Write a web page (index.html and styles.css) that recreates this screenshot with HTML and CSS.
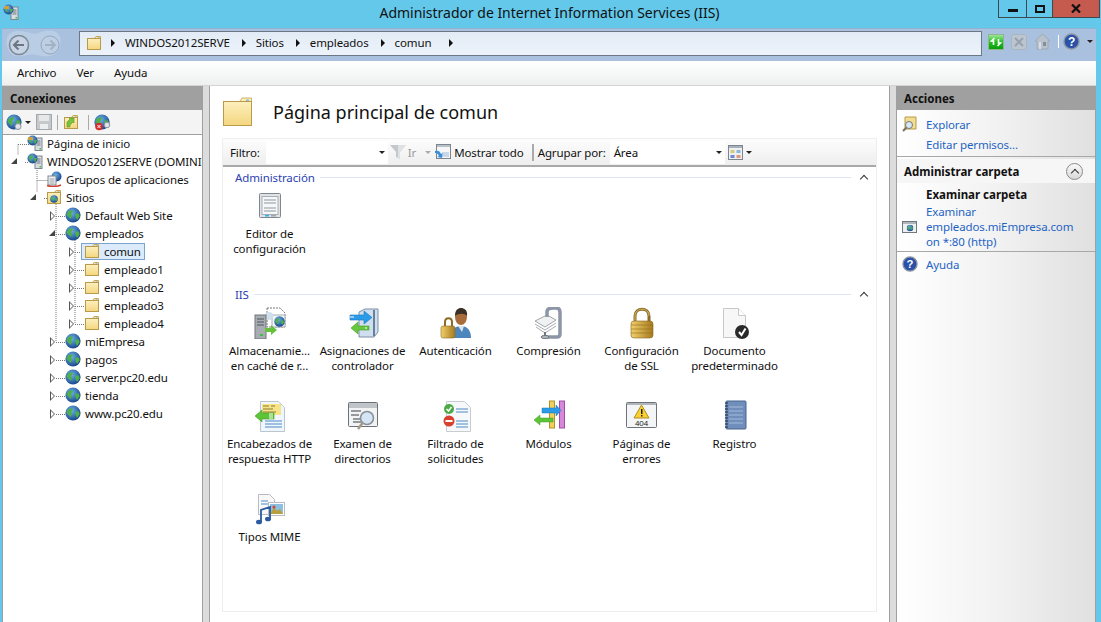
FILE: index.html
```html
<!DOCTYPE html>
<html lang="es">

<head>
    <meta charset="UTF-8" />
    <title>Administrador de Internet Information Services (IIS)</title>
    <link rel="stylesheet" href="styles.css">
</head>

<body>
    <!-- Shared icons -->
    <svg class="defs" width="0" height="0">
        <defs>
            <linearGradient id="folderFace" x1="0" y1="0" x2="0" y2="1">
                <stop offset="0" stop-color="#fdf0bd" />
                <stop offset="1" stop-color="#f3d67f" />
            </linearGradient>
            <radialGradient id="globeFill" cx="0.4" cy="0.35" r="0.7">
                <stop offset="0" stop-color="#6fb4e8" />
                <stop offset="1" stop-color="#123f86" />
            </radialGradient>
            <linearGradient id="goldFill" x1="0" y1="0" x2="1" y2="0">
                <stop offset="0" stop-color="#f2cf6a" />
                <stop offset="1" stop-color="#a67a1e" />
            </linearGradient>
            <linearGradient id="greenBtn" x1="0" y1="0" x2="0" y2="1">
                <stop offset="0" stop-color="#a8e8a0" />
                <stop offset="0.5" stop-color="#20c020" />
                <stop offset="1" stop-color="#0a9a0a" />
            </linearGradient>
            <symbol id="folder" viewBox="0 0 16 16">
                <path d="M9 3 10 1.5h4.5V4H9z" fill="#fbeeb8" stroke="#c8a850" />
                <rect x="11.5" y="2.2" width="2" height="1.2" fill="#8fb6dc" />
                <rect x="1.5" y="3.5" width="13" height="11" fill="url(#folderFace)" stroke="#b89a4a" />
            </symbol>
            <symbol id="globe" viewBox="0 0 16 16">
                <circle cx="8" cy="8" r="7.6" fill="url(#globeFill)" />
                <path d="M3 4.5 6.5 3 8 5 6 7 7 9 5.5 12 3.5 9.5 1.5 8z" fill="#4fb04a" />
                <path d="M10 6.5h4l.5 3-2.500 3.500-1.500-3z" fill="#4fb04a" />
            </symbol>
            <symbol id="server-globe" viewBox="0 0 16 16">
                <rect x="8" y="3" width="7" height="12.500" fill="#d8dde2" stroke="#7d8690" />
                <path d="M9.500 6h4M9.500 8h4M9.500 10h4" stroke="#6d7680" />
                <rect x="12.500" y="13" width="1.500" height="1.500" fill="#40c040" />
                <circle cx="5.500" cy="5.500" r="5" fill="url(#globeFill)" />
                <path d="M2 3.500 5 2l1 2-2 2 .5 2.500L2.500 7z" fill="#4fb04a" />
                <path d="M7 5h3l-1 3-1.500 1z" fill="#4fb04a" />
            </symbol>
        </defs>
    </svg>

    <!-- Title bar -->
    <div class="titlebar">
        <svg class="app-icon" width="16" height="16">
            <use href="#server-globe" />
            <path d="M1 2h5v3H1z" fill="#f0a030" opacity="0.8" />
        </svg>
        <div class="title">Administrador de Internet Information Services (IIS)</div>
        <div class="win-buttons">
            <div class="win-btn btn-min"><span class="glyph-min"></span></div>
            <div class="win-btn btn-max"><span class="glyph-max"></span></div>
            <div class="win-btn btn-close">
                <svg width="10" height="9" viewBox="0 0 10 9">
                    <path d="M1 .5 9 8.500M9 .5 1 8.500" stroke="#111" stroke-width="2.200" />
                </svg>
            </div>
        </div>
    </div>

    <div class="window">
        <!-- Address band -->
        <div class="address-band">
            <svg class="nav-buttons" width="56" height="28" viewBox="0 0 56 28">
                <path d="M1 8C3 1 12 0 20 2c6 1.500 9 2.500 15 0 8-3 17-2 19 5 2 8-1 17-10 19-7 1.500-11-1-16-1.500C21 24 17 27 10 26 3 25-1 16 1 8z" fill="#bccfe6" opacity="0.85" />
                <circle cx="13" cy="15" r="9.500" fill="#c6d4e6" stroke="#7e8a96" stroke-width="1.600" />
                <path d="M18 15H9M12.500 10.500 8 15l4.500 4.500" fill="none" stroke="#6c7682" stroke-width="2" />
                <circle cx="44" cy="15" r="9" fill="#bccfe6" stroke="#98a8ba" />
                <path d="M39 15h9M44.500 10.500 49 15l-4.500 4.500" fill="none" stroke="#a4b2c2" stroke-width="2" />
            </svg>
            <div class="address-box">
                <svg class="crumb-folder" width="16" height="16"><use href="#folder" /></svg>
                <span class="crumb-arrow"></span>
                <span class="crumb">WINDOS2012SERVE</span>
                <span class="crumb-arrow"></span>
                <span class="crumb">Sitios</span>
                <span class="crumb-arrow"></span>
                <span class="crumb">empleados</span>
                <span class="crumb-arrow"></span>
                <span class="crumb crumb-last">comun</span>
                <span class="crumb-arrow"></span>
            </div>
            <div class="address-tools">
                <svg width="16" height="16" viewBox="0 0 16 16">
                    <rect x=".5" y=".5" width="15" height="15" fill="url(#greenBtn)" stroke="#8fb48f" />
                    <path d="M6.500 4 3.500 7H5.500V11M9.500 12l3-3H10.500V5" fill="none" stroke="#fff" stroke-width="1.600" />
                </svg>
                <svg width="16" height="16" viewBox="0 0 16 16">
                    <rect x=".5" y=".5" width="15" height="15" rx="2" fill="#bcc6d0" stroke="#a8b4c2" />
                    <path d="M4 4l8 8M12 4l-8 8" stroke="#98a2ac" stroke-width="2" />
                </svg>
                <svg width="17" height="17" viewBox="0 0 17 17">
                    <path d="M8.500 1 1 8h2v8h11V8h2z" fill="#b8c2cc" stroke="#a0aab4" />
                    <rect x="9" y="9" width="3" height="4" fill="#848e98" />
                    <rect x="5" y="9" width="2" height="7" fill="#d8dee4" />
                </svg>
                <span class="tool-sep"></span>
                <svg width="17" height="17" viewBox="0 0 17 17">
                    <circle cx="8.500" cy="8.500" r="7.500" fill="#2a50a8" stroke="#8b94a2" stroke-width="1.400" />
                    <text x="8.500" y="13" class="help-mark">?</text>
                </svg>
                <span class="mini-arrow"></span>
            </div>
        </div>

        <!-- Menu -->
        <div class="menubar">
            <span>Archivo</span>
            <span>Ver</span>
            <span>Ayuda</span>
        </div>

        <div class="panes">
            <!-- Connections -->
            <div class="pane-left">
                <div class="pane-head">Conexiones</div>
                <div class="conn-tools">
                    <svg width="17" height="17" viewBox="0 0 17 17">
                        <use href="#globe" width="16" height="16" />
                        <circle cx="12" cy="12.500" r="3" fill="#dfe4ea" stroke="#8a929c" />
                    </svg>
                    <span class="mini-arrow"></span>
                    <svg class="tool-gap" width="16" height="16" viewBox="0 0 16 16">
                        <rect x=".5" y=".5" width="15" height="15" fill="#c6c9cc" stroke="#a4a8ac" />
                        <rect x="3" y="1" width="10" height="6" fill="#e6e8ea" />
                        <rect x="4" y="10" width="8" height="5" fill="#eceeef" />
                    </svg>
                    <span class="conn-sep"></span>
                    <svg width="16" height="16" viewBox="0 0 16 16">
                        <use href="#folder" />
                        <path d="M4 13V8l3-3-1-1h5v5l-1-1-3 3v2z" fill="#7cc040" stroke="#5a9a28" stroke-width=".6" />
                    </svg>
                    <span class="conn-sep conn-sep-wide"></span>
                    <svg width="17" height="17" viewBox="0 0 17 17">
                        <use href="#globe" width="16" height="16" />
                        <circle cx="13" cy="11" r="2.800" fill="#dfe4ea" stroke="#8a929c" />
                        <circle cx="5" cy="12.500" r="3.800" fill="#d03030" />
                        <path d="M3.500 11l3 3M6.500 11l-3 3" stroke="#fff" />
                    </svg>
                </div>
                <div class="tree">
                    <svg class="tree-lines" width="90" height="290">
                        <path d="M15 10.500h11M15 10.500V21M22 28.500h4M34 34v12.500h11M34 46.500V58M41 64.500h4M53 70V208M53 82.500h11M53 100.500h11M53 208.500h11M53 226.500h11M53 244.500h11M53 262.500h11M53 280.500h11M72 106V190M72 118.500h9M72 136.500h11M72 154.500h11M72 172.500h11M72 190.500h11"
                            fill="none" stroke="#777" stroke-dasharray="1 1" />
                    </svg>
                    <div class="tree-row lvl-0"><span class="exp"></span>
                        <svg class="node" width="16" height="16"><use href="#server-globe" /><path d="M1 2h5v3H1z" fill="#f0a030" opacity="0.8" /></svg>
                        <span class="node-text">Página de inicio</span>
                    </div>
                    <div class="tree-row lvl-0"><span class="exp open"></span>
                        <svg class="node" width="16" height="16"><use href="#server-globe" /></svg>
                        <span class="node-text">WINDOS2012SERVE (DOMINIO</span>
                    </div>
                    <div class="tree-row lvl-1"><span class="exp"></span>
                        <svg class="node" width="16" height="16" viewBox="0 0 16 16">
                            <circle cx="10.500" cy="5.500" r="5" fill="url(#globeFill)" />
                            <rect x="2" y="5" width="8" height="9" fill="#eef0f2" stroke="#808890" />
                            <path d="M3.500 8h5M3.500 10h5M3.500 12h5" stroke="#9aa2aa" />
                            <path d="M1 14.500c4 1.500 9 1.500 14-.5" fill="none" stroke="#d04030" stroke-width="1.500" />
                        </svg>
                        <span class="node-text">Grupos de aplicaciones</span>
                    </div>
                    <div class="tree-row lvl-1"><span class="exp open"></span>
                        <svg class="node" width="16" height="16">
                            <use href="#folder" />
                            <use href="#globe" x="4" y="6" width="8" height="8" />
                        </svg>
                        <span class="node-text">Sitios</span>
                    </div>
                    <div class="tree-row lvl-2"><span class="exp closed"></span>
                        <svg class="node" width="16" height="16"><use href="#globe" /></svg>
                        <span class="node-text">Default Web Site</span>
                    </div>
                    <div class="tree-row lvl-2"><span class="exp open"></span>
                        <svg class="node" width="16" height="16"><use href="#globe" /></svg>
                        <span class="node-text">empleados</span>
                    </div>
                    <div class="tree-row lvl-3"><span class="exp closed"></span>
                        <span class="selected">
                            <svg class="node" width="16" height="16"><use href="#folder" /></svg>
                            <span class="node-text">comun</span>
                        </span>
                    </div>
                    <div class="tree-row lvl-3"><span class="exp closed"></span>
                        <svg class="node" width="16" height="16"><use href="#folder" /></svg>
                        <span class="node-text">empleado1</span>
                    </div>
                    <div class="tree-row lvl-3"><span class="exp closed"></span>
                        <svg class="node" width="16" height="16"><use href="#folder" /></svg>
                        <span class="node-text">empleado2</span>
                    </div>
                    <div class="tree-row lvl-3"><span class="exp closed"></span>
                        <svg class="node" width="16" height="16"><use href="#folder" /></svg>
                        <span class="node-text">empleado3</span>
                    </div>
                    <div class="tree-row lvl-3"><span class="exp closed"></span>
                        <svg class="node" width="16" height="16"><use href="#folder" /></svg>
                        <span class="node-text">empleado4</span>
                    </div>
                    <div class="tree-row lvl-2"><span class="exp closed"></span>
                        <svg class="node" width="16" height="16"><use href="#globe" /></svg>
                        <span class="node-text">miEmpresa</span>
                    </div>
                    <div class="tree-row lvl-2"><span class="exp closed"></span>
                        <svg class="node" width="16" height="16"><use href="#globe" /></svg>
                        <span class="node-text">pagos</span>
                    </div>
                    <div class="tree-row lvl-2"><span class="exp closed"></span>
                        <svg class="node" width="16" height="16"><use href="#globe" /></svg>
                        <span class="node-text">server.pc20.edu</span>
                    </div>
                    <div class="tree-row lvl-2"><span class="exp closed"></span>
                        <svg class="node" width="16" height="16"><use href="#globe" /></svg>
                        <span class="node-text">tienda</span>
                    </div>
                    <div class="tree-row lvl-2"><span class="exp closed"></span>
                        <svg class="node" width="16" height="16"><use href="#globe" /></svg>
                        <span class="node-text">www.pc20.edu</span>
                    </div>
                </div>
            </div>

            <div class="splitter"></div>

            <!-- Center -->
            <div class="pane-center">
                <div class="page-head">
                    <svg width="32" height="32" viewBox="0 0 32 32">
                        <path d="M18 6l2-3h9.500v6H18z" fill="#fbeeb8" stroke="#cdb468" />
                        <rect x="24" y="4.500" width="3" height="2" fill="#8fb6dc" />
                        <rect x="1.500" y="6.500" width="28" height="24" fill="url(#folderFace)" stroke="#b89a4a" />
                    </svg>
                    <h1>Página principal de comun</h1>
                </div>
                <div class="frame">
                    <div class="filter-bar">
                        <span class="bar-label">Filtro:</span>
                        <span class="combo combo-filter"><span class="mini-arrow"></span></span>
                        <svg class="funnel" width="16" height="16" viewBox="0 0 16 16">
                            <path d="M0 1h16L10 8v7l-4-2V8z" fill="#c4c8cc" />
                            <path d="M8 1h8l-6 7v7l-2-1z" fill="#dfe2e4" />
                        </svg>
                        <span class="bar-muted">Ir</span>
                        <span class="mini-arrow muted"></span>
                        <svg class="show-icon" width="16" height="16" viewBox="0 0 16 16">
                            <rect x="1.500" y=".5" width="14" height="14" fill="#f4f6f8" stroke="#7d8690" />
                            <rect x="2" y="1" width="13" height="2" fill="#b8c0c8" />
                            <rect x="7" y="8" width="7" height="5" fill="#c8d8e8" />
                            <path d="M0 7c3-1 5 0 6 3l1.500-1L7 14l-5-1 2-1C3 10 2 9 0 9z" fill="#3a90d8" />
                        </svg>
                        <span class="bar-label">Mostrar todo</span>
                        <span class="bar-sep"></span>
                        <span class="bar-label">Agrupar por:</span>
                        <span class="combo combo-group">Área<span class="mini-arrow"></span></span>
                        <svg class="view-icon" width="15" height="15" viewBox="0 0 15 15">
                            <rect x=".5" y=".5" width="14" height="14" fill="#eef0f2" stroke="#7d8690" />
                            <rect x="1" y="1" width="13" height="2" fill="#a8b0b8" />
                            <rect x="2.500" y="5" width="4" height="3" fill="#d8c878" />
                            <rect x="8.500" y="5" width="4" height="3" fill="#88b8e0" />
                            <rect x="2.500" y="10" width="4" height="3" fill="#7088d0" />
                            <rect x="8.500" y="10" width="4" height="3" fill="#e09878" />
                        </svg>
                        <span class="mini-arrow"></span>
                    </div>

                    <div class="section-head">
                        <span>Administración</span><span class="section-line"></span><span class="chevron"></span>
                    </div>
                    <div class="feature-grid">
                        <div class="feature">
                            <svg width="32" height="32" viewBox="0 0 32 32">
                                <rect x="5.500" y="3.500" width="21" height="24" rx="1" fill="#dfe3e7" stroke="#7f868e" />
                                <rect x="8" y="6.500" width="16" height="18" fill="#f6f7f8" stroke="#a8aeb4" />
                                <path d="M10 10h12M10 13h12M10 18h12M10 21h12" stroke="#8f979f" />
                                <rect x="11" y="25" width="4" height="1.500" fill="#28b4e8" />
                                <rect x="17" y="25" width="5" height="1.500" fill="#a0a6ac" />
                            </svg>
                            <div class="feature-label">Editor de<br>configuración</div>
                        </div>
                    </div>

                    <div class="section-head section-second">
                        <span>IIS</span><span class="section-line"></span><span class="chevron"></span>
                    </div>
                    <div class="feature-grid">
                        <div class="feature">
                            <svg width="32" height="32" viewBox="0 0 32 32">
                                <path d="M13 1h13l5 5v14H13z" fill="#fff" stroke="#777" stroke-dasharray="2 1" />
                                <path d="M18 8h13v12H18z" fill="#f2f4f6" stroke="#a8b0b8" />
                                <circle cx="15" cy="9" r="4" fill="#cfe0ea" />
                                <rect x="1" y="8" width="11" height="24" fill="#a6acb2" stroke="#70767c" />
                                <path d="M3 12h7M3 15h7M3 18h7" stroke="#50565c" />
                                <rect x="6" y="27" width="3" height="2" fill="#40c040" />
                                <use href="#globe" x="20" y="9" width="11" height="11" />
                                <path d="M11 21h6v-3l6 5-6 5v-3h-6z" fill="#66c23c" />
                            </svg>
                            <div class="feature-label">Almacenamie...<br>en caché de r...</div>
                        </div>
                        <div class="feature">
                            <svg width="32" height="32" viewBox="0 0 32 32">
                                <path d="M12 5 18 2h13v23l-4 5H12z" fill="#cfdff0" stroke="#7c8fa6" />
                                <path d="M27 3v26" stroke="#6a809a" stroke-width="2" />
                                <path d="M3 8h14V4l8 6.500-8 6.500v-4H3z" fill="#2b9be8" stroke="#1b78c0" stroke-width=".6" />
                                <path d="M4 21l7-6v4h11v4H11v4z" fill="#66c83c" stroke="#489a28" stroke-width=".6" />
                                <path d="M4 9v2M6 9v2M19 20v2" stroke="#fff" />
                            </svg>
                            <div class="feature-label">Asignaciones de<br>controlador</div>
                        </div>
                        <div class="feature">
                            <svg width="32" height="32" viewBox="0 0 32 32">
                                <path d="M11 31c-1-8 4-12 10-12s10 4 10 12z" fill="#4d86bc" />
                                <path d="M18 19h6l-2 6z" fill="#d8e4ee" />
                                <ellipse cx="21" cy="10" rx="6" ry="8" fill="#a86c3c" />
                                <path d="M15 9c0-6 3-8 6-8s7 2 6 8c-2-3-9-3-12 0z" fill="#3a3026" />
                                <path d="M5 20v-5c0-5 7-5 7 0v5" fill="none" stroke="#8a6c28" stroke-width="2" />
                                <rect x="1" y="19" width="14" height="12" rx="2" fill="url(#goldFill)" stroke="#8a6c28" stroke-width=".6" />
                            </svg>
                            <div class="feature-label">Autenticación</div>
                        </div>
                        <div class="feature">
                            <svg width="32" height="32" viewBox="0 0 32 32">
                                <path d="M2 14 14 8l9 5-11 7z" fill="#f0f1f2" stroke="#a0a4a8" />
                                <path d="M2 17l10 6 11-7M3 20l9 6 11-7" fill="none" stroke="#a8acb0" />
                                <path d="M14 10V5c0-3 3-4 6-4h3c3 0 4 2 4 4v22c0 2-1 3-3 3H12" fill="none" stroke="#8c96a6" stroke-width="3.500" />
                                <path d="M12 25v5" stroke="#70767e" stroke-width="2" />
                                <ellipse cx="12" cy="30" rx="4" ry="1.500" fill="#b8bcc2" stroke="#70767e" />
                            </svg>
                            <div class="feature-label">Compresión</div>
                        </div>
                        <div class="feature">
                            <svg width="32" height="32" viewBox="0 0 32 32">
                                <path d="M9 15V9c0-9 14-9 14 0v6" fill="none" stroke="#8a6c28" stroke-width="3" />
                                <path d="M9 15V9c0-9 14-9 14 0" fill="none" stroke="#d8b860" />
                                <rect x="5" y="14" width="22" height="17" rx="3" fill="url(#goldFill)" stroke="#86661e" stroke-width=".6" />
                                <path d="M5 18h22M5 22h22M5 26h22" stroke="#8f6e20" stroke-opacity=".6" />
                            </svg>
                            <div class="feature-label">Configuración<br>de SSL</div>
                        </div>
                        <div class="feature">
                            <svg width="32" height="32" viewBox="0 0 32 32">
                                <path d="M4.500 1.500h15l7 7v22h-22z" fill="#f7f7f7" stroke="#c6c8ca" />
                                <path d="M19.500 1.500v7h7" fill="#fff" stroke="#c6c8ca" />
                                <circle cx="23" cy="25" r="7" fill="#2a2a2a" />
                                <path d="M20 25l2.500 3 4-6.500" fill="none" stroke="#fff" stroke-width="2" />
                            </svg>
                            <div class="feature-label">Documento<br>predeterminado</div>
                        </div>
                        <div class="feature">
                            <svg width="32" height="32" viewBox="0 0 32 32">
                                <path d="M6.500 1.500h18l6 6v24h-24z" fill="#f0f6fc" stroke="#b8c6d4" />
                                <rect x="8" y="4" width="19" height="11" fill="#f8e488" />
                                <path d="M9 6h6M17 6h4M9 9h10M9 12h13" stroke="#8a7a30" />
                                <path d="M11 21h17M11 24h17M11 27h17" stroke="#4a8ac8" />
                                <path d="M1 16l7-6v3h12v6H8v3z" fill="#5cc436" stroke="#459a28" stroke-width=".6" />
                                <path d="M16 13v6M18 13v6" stroke="#fff" />
                            </svg>
                            <div class="feature-label">Encabezados de<br>respuesta HTTP</div>
                        </div>
                        <div class="feature">
                            <svg width="32" height="32" viewBox="0 0 32 32">
                                <rect x="1.500" y="2.500" width="29" height="24" rx="1" fill="#f2f3f4" stroke="#6c7278" />
                                <rect x="2" y="3" width="28" height="5" fill="#c0c4c8" />
                                <path d="M4 11h10M4 15h8M6 19h8M6 22h8" stroke="#3c4044" />
                                <circle cx="20" cy="18" r="6.500" fill="#d4e6f6" stroke="#8a9098" stroke-width="1.600" />
                                <path d="M15.500 23 11 29" stroke="#a69a84" stroke-width="2.500" />
                            </svg>
                            <div class="feature-label">Examen de<br>directorios</div>
                        </div>
                        <div class="feature">
                            <svg width="32" height="32" viewBox="0 0 32 32">
                                <path d="M6.500 1.500h18l6 6v24h-24z" fill="#f6f8fa" stroke="#c6ccd2" />
                                <path d="M16 9h12M16 12h12M16 21h12M16 24h12M16 27h12" stroke="#4a8ac8" />
                                <circle cx="9" cy="9" r="5" fill="#4aaa44" />
                                <path d="M6.500 9l2 2 3-4" fill="none" stroke="#fff" stroke-width="1.500" />
                                <circle cx="9" cy="21" r="5.500" fill="#d84030" />
                                <rect x="5.500" y="20" width="7" height="2" fill="#fff" />
                            </svg>
                            <div class="feature-label">Filtrado de<br>solicitudes</div>
                        </div>
                        <div class="feature">
                            <svg width="32" height="32" viewBox="0 0 32 32">
                                <rect x="16.500" y="1" width="5" height="27" fill="#f0d060" stroke="#b09428" />
                                <rect x="26.500" y="1" width="5" height="27" fill="#d888d8" stroke="#a050a8" />
                                <path d="M9 8h14V5l5 5.500-5 5.500v-3H9z" fill="#2b9be8" stroke="#1b78c0" stroke-width=".5" />
                                <path d="M1 20l6-5v3h13v4H7v3z" fill="#5cc436" stroke="#459a28" stroke-width=".5" />
                            </svg>
                            <div class="feature-label">Módulos</div>
                        </div>
                        <div class="feature">
                            <svg width="32" height="32" viewBox="0 0 32 32">
                                <rect x=".5" y="2.500" width="30" height="25" rx="1" fill="#f4f5f6" stroke="#6c7278" />
                                <rect x="1" y="3" width="29" height="2" fill="#b0b6bc" />
                                <path d="M15.500 5 23 18H8z" fill="#f8d030" stroke="#b09020" />
                                <rect x="15" y="9" width="1.500" height="5" fill="#222" />
                                <rect x="15" y="15" width="1.500" height="1.500" fill="#222" />
                                <text x="15.500" y="26" class="err-code">404</text>
                            </svg>
                            <div class="feature-label">Páginas de<br>errores</div>
                        </div>
                        <div class="feature">
                            <svg width="32" height="32" viewBox="0 0 32 32">
                                <rect x="7" y="1" width="20" height="28" rx="1" fill="#6f8ebc" stroke="#4a6490" />
                                <path d="M10 7h14M10 11h14M10 15h14M10 19h14M10 23h14" stroke="#a8bcd8" />
                                <path d="M6 3h3M6 6h3M6 9h3M6 12h3M6 15h3M6 18h3M6 21h3M6 24h3M6 27h3" stroke="#3a4a66" stroke-width="1.400" />
                            </svg>
                            <div class="feature-label">Registro</div>
                        </div>
                        <div class="feature">
                            <svg width="32" height="32" viewBox="0 0 32 32">
                                <path d="M4.500 1.500h11l5 5v15h-16z" fill="#f8f8f8" stroke="#b8bcc0" />
                                <path d="M7 8h7M7 11h9" stroke="#4a8ac8" />
                                <rect x="14.500" y="9.500" width="16" height="13" fill="#fff" stroke="#b8bcc0" />
                                <rect x="16" y="11" width="13" height="10" fill="#8cc0e0" />
                                <path d="M16 21l4-7 3 4 3-2 3 5z" fill="#b8a040" />
                                <circle cx="20" cy="14" r="1.500" fill="#d84030" />
                                <path d="M7 29V17l9-3v12" fill="none" stroke="#2c5aa0" stroke-width="1.800" />
                                <ellipse cx="5" cy="29" rx="3" ry="2.300" fill="#2c5aa0" />
                                <ellipse cx="14" cy="26" rx="3" ry="2.300" fill="#2c5aa0" />
                            </svg>
                            <div class="feature-label">Tipos MIME</div>
                        </div>
                    </div>
                </div>
            </div>

            <div class="splitter splitter-right"></div>

            <!-- Actions -->
            <div class="pane-right">
                <div class="pane-head">Acciones</div>
                <div class="action-group first-group">
                    <div class="action">
                        <svg width="16" height="16" viewBox="0 0 16 16">
                            <path d="M3 1h11v12H3z" fill="#f4dc90" stroke="#b89a4a" />
                            <circle cx="7" cy="9" r="3.500" fill="#d8e8f4" stroke="#70787e" />
                            <path d="M4.500 11.500 1 15" stroke="#80705a" stroke-width="2" />
                        </svg>
                        <a>Explorar</a>
                    </div>
                    <div class="action"><span class="no-icon"></span><a>Editar permisos...</a></div>
                </div>
                <div class="task-head">
                    <span>Administrar carpeta</span>
                    <span class="collapse"><span class="chevron"></span></span>
                </div>
                <div class="action-group browse-group">
                    <div class="action-title">Examinar carpeta</div>
                    <div class="action browse-link">
                        <svg width="16" height="16" viewBox="0 0 16 16">
                            <rect x=".5" y="2.500" width="14" height="11" fill="#eef0f2" stroke="#70787e" />
                            <rect x="1" y="3" width="13" height="2" fill="#b0b6bc" />
                            <use href="#globe" x="4.500" y="5.500" width="7" height="7" />
                        </svg>
                        <a>Examinar<br>empleados.miEmpresa.com<br>on *:80 (http)</a>
                    </div>
                </div>
                <div class="action-group help-group">
                    <div class="action">
                        <svg width="16" height="16" viewBox="0 0 17 17">
                            <circle cx="8.500" cy="8.500" r="7.500" fill="#2a50a8" stroke="#8b94a2" stroke-width="1.400" />
                            <text x="8.500" y="13" class="help-mark">?</text>
                        </svg>
                        <a>Ayuda</a>
                    </div>
                </div>
            </div>
        </div>
    </div>
</body>

</html>
```

FILE: styles.css
```css
body {
    margin: 0;
    width: 1101px;
    height: 622px;
    overflow: hidden;
    background-color: #63c8ea;
    font-family: "Noto Sans", "Open Sans", sans-serif;
    font-size: 11.5px;
    letter-spacing: -0.12px;
    color: #111;
}

.defs {
    position: absolute;
}

/* Title bar */
.titlebar {
    display: flex;
    height: 28px;
    position: relative;
}

.app-icon {
    margin: 4px 0 0 3px;
}

.title {
    flex: 1;
    text-align: center;
    font-size: 14px;
    letter-spacing: -0.02px;
    line-height: 26px;
    padding-right: 21px;
}

.win-buttons {
    position: absolute;
    top: 0;
    left: 998px;
    display: flex;
    height: 18px;
    border: 1px solid #3c4a50;
    border-top: 0;
    box-sizing: border-box;
}

.win-btn {
    display: flex;
    align-items: center;
    justify-content: center;
    border-right: 1px solid #3c4a50;
    box-sizing: border-box;
}

.btn-min {
    width: 28px;
}

.btn-max {
    width: 26px;
}

.btn-close {
    width: 46px;
    border-right: 0;
    background-color: #c55a4e;
}

.glyph-min {
    width: 10px;
    height: 3px;
    margin-top: 3px;
    background-color: #111;
}

.glyph-max {
    width: 6px;
    height: 4px;
    border: 2px solid #111;
}

.window {
    margin-left: 2px;
    width: 1094px;
}

/* Address band */
.address-band {
    display: flex;
    height: 33px;
    background-color: #a9c1de;
    border-top: 1px solid #8fb4d4;
    box-sizing: border-box;
    align-items: flex-start;
}

.nav-buttons {
    margin: 1px 0 0 4px;
}

.address-box {
    display: flex;
    align-items: center;
    width: 903px;
    height: 25px;
    margin: 2px 0 0 17px;
    box-sizing: border-box;
    border: 1px solid #6c7885;
    background: linear-gradient(#e2ebf6, #eef3fa);
    padding: 0 0 2px 6px;
}

.crumb-folder {
    margin-right: 9px;
}

.crumb-arrow {
    width: 0;
    height: 0;
    border-left: 4px solid #111;
    border-top: 4px solid transparent;
    border-bottom: 4px solid transparent;
    margin: 0 10px 0 0;
}

.crumb {
    margin-right: 12px;
}

.crumb-last {
    margin-right: 18px;
}

.address-tools {
    display: flex;
    align-items: center;
    margin: 4px 0 0 6px;
    gap: 7px;
}

.tool-sep {
    width: 1px;
    height: 13px;
    margin-right: -3px;
    background-color: #fff;
}

.help-mark {
    font-family: "Liberation Sans", sans-serif;
    font-size: 12px;
    font-weight: bold;
    fill: #fff;
    text-anchor: middle;
}

.err-code {
    font-family: "Liberation Sans", sans-serif;
    font-size: 8px;
    fill: #222;
    text-anchor: middle;
}

.mini-arrow {
    display: inline-block;
    width: 0;
    height: 0;
    border-top: 3px solid #222;
    border-left: 3px solid transparent;
    border-right: 3px solid transparent;
}

.mini-arrow.muted {
    border-top-color: #aaa;
}

/* Menu */
.menubar {
    display: flex;
    height: 25px;
    align-items: center;
    gap: 20px;
    padding: 0 0 2px 15px;
    background: linear-gradient(#ffffff, #eef0f0);
    border-bottom: 1px solid #d4d4d4;
    box-sizing: border-box;
}

/* Panes */
.panes {
    display: flex;
    height: 536px;
    background-color: #dcdcdc;
}

.pane-head {
    height: 24px;
    line-height: 25px;
    padding-left: 7px;
    background-color: #a0a0a0;
    font-weight: bold;
    letter-spacing: 0;
}

.pane-left {
    width: 199px;
    background-color: #fff;
    border-right: 1px solid #a0a0a0;
    border-left: 1px solid #a0a0a0;
    overflow: hidden;
}

.splitter {
    width: 6px;
    border-right: 1px solid #a0a0a0;
}

.splitter-right {
    border-left: 1px solid #a0a0a0;
}

.conn-tools {
    display: flex;
    align-items: center;
    height: 25px;
    box-sizing: border-box;
    padding-left: 3px;
    border-bottom: 1px solid #a0a0a0;
    background-color: #f4f4f4;
}

.conn-tools .mini-arrow {
    margin: 0 3px 0 2px;
}

.tool-gap {
    margin-left: 2px;
}

.conn-sep {
    width: 1px;
    height: 15px;
    margin: 0 5px;
    background-color: #aaa;
}

.conn-sep-wide {
    margin-left: 9px;
}

/* Tree */
.tree {
    position: relative;
    margin-top: -1px;
    white-space: nowrap;
}

.tree-lines {
    position: absolute;
    top: 0;
    left: 0;
}

.tree-row {
    position: relative;
    display: flex;
    align-items: center;
    height: 18px;
}

.lvl-0 {
    padding-left: 7px;
}

.lvl-1 {
    padding-left: 26px;
}

.lvl-2 {
    padding-left: 45px;
}

.lvl-3 {
    padding-left: 64px;
}

.exp {
    position: relative;
    flex: none;
    width: 17px;
    height: 18px;
}

.exp.closed::before {
    content: "";
    position: absolute;
    left: 2px;
    top: 5px;
    width: 0;
    height: 0;
    border-left: 5px solid #555;
    border-top: 5px solid transparent;
    border-bottom: 5px solid transparent;
}

.exp.closed::after {
    content: "";
    position: absolute;
    left: 3px;
    top: 7px;
    width: 0;
    height: 0;
    border-left: 3px solid #fff;
    border-top: 3px solid transparent;
    border-bottom: 3px solid transparent;
}

.exp.open::before {
    content: "";
    position: absolute;
    left: 1px;
    top: 6px;
    width: 0;
    height: 0;
    border-bottom: 6px solid #444;
    border-left: 6px solid transparent;
}

.node {
    flex: none;
}

.node-text {
    margin-left: 4px;
    background-color: #fff;
}

.selected {
    display: flex;
    align-items: center;
    height: 17px;
    margin-left: -3px;
    padding: 0 3px 0 2px;
    box-sizing: border-box;
    border: 1px solid #7da2ce;
    background-color: #dcebfb;
}

.selected .node-text {
    background-color: transparent;
}

/* Center */
.pane-center {
    width: 679px;
    background-color: #fff;
}

.page-head {
    display: flex;
    align-items: center;
    height: 52px;
    padding-left: 12px;
}

.page-head svg {
    margin-top: -2px;
}

.page-head h1 {
    margin: 0 0 0 19px;
    font-size: 18px;
    font-weight: normal;
    letter-spacing: 0;
}

.frame {
    width: 655px;
    height: 474px;
    margin-left: 12px;
    box-sizing: border-box;
    border: 1px solid #eeeeee;
}

.filter-bar {
    display: flex;
    align-items: center;
    height: 28px;
    box-sizing: border-box;
    padding-left: 7px;
    background: linear-gradient(#fdfdfd, #eeeeee);
    border-bottom: 2px solid #a8a8a8;
}

.combo {
    display: flex;
    align-items: center;
    justify-content: flex-end;
    height: 23px;
    box-sizing: border-box;
    background-color: #fff;
    padding-right: 3px;
}

.combo-filter {
    width: 122px;
    margin-left: 6px;
}

.combo-group {
    width: 115px;
    justify-content: space-between;
    padding-left: 4px;
    margin-left: 4px;
}

.funnel {
    margin-left: 2px;
}

.bar-muted {
    color: #999;
    margin: 0 9px 0 2px;
}

.show-icon {
    margin: 0 3px 0 4px;
}

.bar-sep {
    width: 2px;
    height: 17px;
    margin: 0 4px 0 8px;
    background-color: #aaa;
}

.view-icon {
    margin: 0 3px 0 3px;
}

.section-head {
    display: flex;
    align-items: center;
    height: 18px;
    margin: 1px 0 4px 12px;
    color: #2a3fb0;
}

.section-second {
    margin-top: 2px;
}

.section-line {
    flex: 1;
    height: 1px;
    margin: 0 2px 0 5px;
    background-color: #dce6f2;
}

.chevron {
    display: inline-block;
    width: 5px;
    height: 5px;
    margin: 3px 9px 0 8px;
    border-left: 1.5px solid #333;
    border-top: 1.5px solid #333;
    transform: rotate(45deg);
}

.feature-grid {
    display: grid;
    grid-template-columns: repeat(6, 93px);
    grid-auto-rows: 93px;
}

.feature {
    display: flex;
    flex-direction: column;
    align-items: center;
    text-align: center;
    white-space: nowrap;
    line-height: 15px;
}

.feature svg {
    margin-bottom: 4px;
}

/* Actions */
.pane-right {
    width: 198px;
    background: linear-gradient(to right, #ffffff, #f2f2f2 50%, #e0e0e0);
    border-right: 1px solid #a0a0a0;
}

.action-group {
    border-bottom: 1px solid #a8a8a8;
}

.first-group {
    padding: 4px 0 2px;
    margin-bottom: 2px;
}

.action {
    display: flex;
    align-items: center;
    height: 20px;
    padding-left: 5px;
}

.action svg,
.no-icon {
    flex: none;
    width: 16px;
    margin-right: 8px;
}

.action a {
    color: #1f64c4;
    line-height: 15px;
}

.task-head {
    display: flex;
    align-items: center;
    justify-content: space-between;
    height: 24px;
    padding: 0 12px 0 7px;
    font-weight: bold;
    letter-spacing: 0;
    background-color: #f6f6f6;
}

.collapse {
    display: flex;
    align-items: center;
    justify-content: center;
    width: 15px;
    height: 15px;
    border: 1px solid #8a8a8a;
    border-radius: 50%;
    background: linear-gradient(#fafafa, #d8d8d8);
}

.collapse .chevron {
    margin: 3px 0 0 0;
}

.browse-group {
    padding: 4px 0 2px;
}

.action-title {
    padding-left: 29px;
    font-weight: bold;
    letter-spacing: 0;
    line-height: 15px;
    margin-bottom: 2px;
}

.browse-link {
    height: 45px;
}

.help-group {
    border-bottom: 0;
    padding-top: 2px;
}
```
